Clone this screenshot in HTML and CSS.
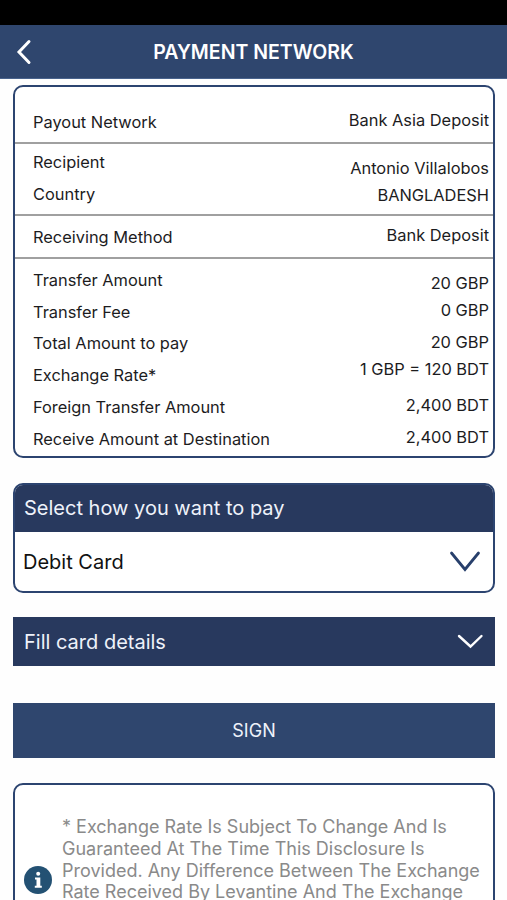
FILE: index.html
```html
<!DOCTYPE html>
<html lang="en">
<head>
<meta charset="utf-8">
<title>Payment Network</title>
<link rel="stylesheet" href="styles.css">
</head>
<body>
<div class="status"></div>
<header class="bar">
  <svg class="back" viewBox="0 0 16 26"><path d="M13 2.5 3 13l10 10.500"/></svg>
  <h1>PAYMENT NETWORK</h1>
</header>
<main>
  <section class="card summary">
    <div class="group network">
      <div class="labels"><span>Payout Network</span></div>
      <div class="values"><span>Bank Asia Deposit</span></div>
    </div>
    <div class="group recipient">
      <div class="labels"><span>Recipient</span><span>Country</span></div>
      <div class="values"><span>Antonio Villalobos</span><span class="caps">BANGLADESH</span></div>
    </div>
    <div class="group method">
      <div class="labels"><span>Receiving Method</span></div>
      <div class="values"><span>Bank Deposit</span></div>
    </div>
    <div class="group amounts">
      <div class="labels"><span>Transfer Amount</span><span>Transfer Fee</span><span>Total Amount to pay</span><span>Exchange Rate*</span><span>Foreign Transfer Amount</span><span>Receive Amount at Destination</span></div>
      <div class="values"><span>20 GBP</span><span>0 GBP</span><span class="total">20 GBP</span><span class="rate">1 GBP = 120 BDT</span><span class="foreign">2,400 BDT</span><span class="receive">2,400 BDT</span></div>
    </div>
  </section>
  <section class="card pay">
    <h2>Select how you want to pay</h2>
    <div class="choice"><span>Debit Card</span>
      <svg class="chev" viewBox="0 0 32 24"><path d="M2.500 3 16 19.500 29.500 3"/></svg>
    </div>
  </section>
  <section class="details"><span>Fill card details</span>
    <svg class="chev-sm" viewBox="0 0 28 18"><path d="M3 3 14.500 13.500 25.500 3"/></svg>
  </section>
  <button class="sign">SIGN</button>
  <section class="card note">
    <svg class="info" viewBox="0 0 28 28"><circle cx="14" cy="14" r="14"/><path d="M11 11.500h5.300v8.200h1.500v2h-7v-2h1.700v-6.200H11z"/><circle class="dot" cx="14.200" cy="7.800" r="2"/></svg>
    <p>* Exchange Rate Is Subject To Change And Is<br>Guaranteed At The Time This Disclosure Is<br>Provided. Any Difference Between The Exchange<br>Rate Received By Levantine And The Exchange</p>
  </section>
</main>
</body>
</html>
```
FILE: styles.css
```css
* { box-sizing: border-box; }
html, body { height: 900px; overflow: hidden; }
body { margin: 0; background: #fefefe; font-family: Inter, "Liberation Sans", sans-serif; color: #1c1c1e; }
h1, h2, p { margin: 0; font-weight: 400; }
svg { display: block; fill: none; stroke-linecap: round; stroke-linejoin: miter; }
.status { height: 25px; background: #000; }
.bar { height: 54px; background: #2f466e; display: grid; grid-template-columns: 60px 1fr 60px; align-items: center; color: #fff; border-bottom: 1px solid #49638d; }
.back { width: 16px; height: 26px; margin-left: 16px; stroke: #fff; stroke-width: 3; }
.bar h1 { font-size: 19.500px; font-weight: 600; text-align: center; white-space: nowrap; line-height: 54px; }
main { padding: 6px 12px 0 13px; }
.card { border: 2px solid #2c4470; border-radius: 10px; background: #fff; }
.summary { height: 373px; }
.group { display: flex; justify-content: space-between; border-bottom: 2px solid #a0a0a0; font-size: 16.400px; white-space: nowrap; }
.group span { display: block; }
.labels { padding-left: 18px; line-height: 31.700px; }
.values { padding-right: 4px; line-height: 27px; text-align: right; }
.network { height: 57px; padding-top: 19.500px; }
.recipient { height: 72px; padding-top: 3.300px; }
.recipient .values { padding-top: 8.200px; }
.method { height: 43px; padding-top: 5.700px; }
.amounts { border: 0; padding-top: 6px; }
.amounts .values { padding-top: 5px; }
.values .total { margin-top: 5px; }
.values .foreign { margin-top: 9px; }
.values .receive { margin-top: 5px; }
.pay { margin-top: 25px; height: 110px; overflow: hidden; }
.pay h2 { height: 47px; line-height: 47px; padding-left: 9px; background: #28395e; color: #eef2fa; font-size: 20px; }
.choice { height: 59px; padding: 0 12px 0 8px; display: flex; align-items: center; justify-content: space-between; font-size: 20px; color: #111; }
.chev { width: 32px; height: 24px; stroke: #28406c; stroke-width: 2.800; }
.details { margin-top: 24px; height: 49px; padding: 0 11px; background: #28395e; color: #eef2fa; font-size: 20px; display: flex; align-items: center; justify-content: space-between; }
.chev-sm { width: 28px; height: 18px; stroke: #fff; stroke-width: 2.400; }
.sign { display: block; width: 100%; height: 55px; margin-top: 37px; padding: 0; border: 0; background: #2f466e; color: #eef2fa; font: 18px Inter, sans-serif; }
.note { margin-top: 25px; height: 180px; display: flex; }
.info { width: 28px; height: 28px; margin: 81px 0 0 9px; fill: #235173; }
.info path, .info .dot { fill: #fff; }
.note p { margin: 31px 0 0 10px; font-size: 18px; line-height: 21.800px; color: #8a8a8a; white-space: nowrap; }
```
